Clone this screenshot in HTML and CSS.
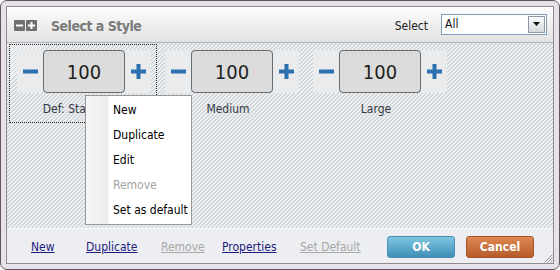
FILE: index.html
```html
<!DOCTYPE html>
<html>
<head>
<meta charset="utf-8">
<link rel="stylesheet" href="styles.css">
</head>
<body>
<div class="window">
  <div class="inner">
    <header class="hdr">
      <svg class="tools" width="24" height="11" viewBox="0 0 24 11">
        <rect x="0" y="0" width="11" height="11" rx="1" fill="#707070"/>
        <rect x="2" y="4.5" width="7" height="2" fill="#fff"/>
        <rect x="12" y="0" width="11" height="11" rx="1" fill="#707070"/>
        <rect x="14" y="4.5" width="7" height="2" fill="#fff"/>
        <rect x="16.5" y="2" width="2" height="7" fill="#fff"/>
      </svg>
      <h1 class="title">Select a Style</h1>
      <span class="sel-label">Select</span>
      <div class="select">
        <span class="sel-value">All</span>
        <span class="sel-drop">
          <svg width="8" height="5" viewBox="0 0 8 5"><path d="M0 0h7L3.5 4z" fill="#111"/></svg>
        </span>
      </div>
    </header>

    <main class="area">
      <div class="cell selected">
        <div class="controls">
          <span class="step"><svg width="15" height="15" viewBox="0 0 15 15"><rect x="0" y="5.5" width="15" height="4" fill="#2c70b0"/></svg></span>
          <span class="value">100</span>
          <span class="step"><svg width="15" height="15" viewBox="0 0 15 15"><rect x="0" y="5.5" width="15" height="4" fill="#2c70b0"/><rect x="5.5" y="0" width="4" height="15" fill="#2c70b0"/></svg></span>
        </div>
        <div class="label">Def: Standard</div>
      </div>
      <div class="cell">
        <div class="controls">
          <span class="step"><svg width="15" height="15" viewBox="0 0 15 15"><rect x="0" y="5.5" width="15" height="4" fill="#2c70b0"/></svg></span>
          <span class="value">100</span>
          <span class="step"><svg width="15" height="15" viewBox="0 0 15 15"><rect x="0" y="5.5" width="15" height="4" fill="#2c70b0"/><rect x="5.5" y="0" width="4" height="15" fill="#2c70b0"/></svg></span>
        </div>
        <div class="label">Medium</div>
      </div>
      <div class="cell">
        <div class="controls">
          <span class="step"><svg width="15" height="15" viewBox="0 0 15 15"><rect x="0" y="5.5" width="15" height="4" fill="#2c70b0"/></svg></span>
          <span class="value">100</span>
          <span class="step"><svg width="15" height="15" viewBox="0 0 15 15"><rect x="0" y="5.5" width="15" height="4" fill="#2c70b0"/><rect x="5.5" y="0" width="4" height="15" fill="#2c70b0"/></svg></span>
        </div>
        <div class="label">Large</div>
      </div>

      <ul class="menu">
        <li>New</li>
        <li>Duplicate</li>
        <li>Edit</li>
        <li class="disabled">Remove</li>
        <li>Set as default</li>
      </ul>
    </main>

    <footer class="foot">
      <nav class="links">
        <a href="#">New</a>
        <a href="#">Duplicate</a>
        <a href="#" class="disabled">Remove</a>
        <a href="#">Properties</a>
        <a href="#" class="disabled">Set Default</a>
      </nav>
      <div class="buttons">
        <button class="btn ok">OK</button>
        <button class="btn cancel">Cancel</button>
      </div>
      <svg class="grip" width="9" height="9" viewBox="0 0 9 9">
        <path d="M8.5 0.5L0.5 8.5M8.5 3.5L3.5 8.5M8.5 6.5L6.5 8.5" stroke="#9a9a9a" stroke-width="1"/>
      </svg>
    </footer>
  </div>
</div>
</body>
</html>
```

FILE: styles.css
```css
* { box-sizing: border-box; }
html, body { margin: 0; padding: 0; }
body {
  width: 560px;
  height: 270px;
  background: #ffffff;
  font-family: "DejaVu Sans Condensed", "DejaVu Sans", sans-serif;
  font-size: 12px;
  color: #222;
}
.window {
  width: 560px;
  height: 270px;
  border: 1px solid #5f5462;
  border-radius: 7px;
  background: #e9e1ea;
  padding: 5px;
}
.inner {
  width: 548px;
  height: 258px;
  border: 1px solid #8f8b95;
  display: flex;
  flex-direction: column;
  background: #eceef1;
}
.hdr {
  flex: none;
  height: 36px;
  border-bottom: 1px solid #b0b3b7;
  background: linear-gradient(#fdfdfd, #e2e2e2);
  display: flex;
  align-items: center;
  padding: 2px 6px 0 7px;
}
.tools { display: block; flex: none; }
.title {
  margin: 0 0 0 13px;
  font-size: 14px;
  font-weight: bold;
  letter-spacing: -0.5px;
  color: #7b7b7b;
}
.sel-label {
  margin-left: auto;
  color: #222;
}
.select {
  margin-left: 13px;
  width: 106px;
  height: 21px;
  margin-top: -3px;
  border: 1px solid #7f9db9;
  background: #fff;
  display: flex;
  align-items: center;
  padding: 0 1px 0 3px;
}
.sel-value { flex: 1; color: #111; }
.sel-drop {
  width: 17px;
  height: 17px;
  border: 1px solid #8c9aa8;
  background: linear-gradient(#fafafa, #d6d9dc);
  display: flex;
  align-items: center;
  justify-content: center;
}
.area {
  flex: 1;
  position: relative;
  display: flex;
  align-items: flex-start;
  padding: 1px 0 0 2px;
  background-color: #dadee1;
  background-image: repeating-linear-gradient(135deg, #d2d7db 0 1.4px, #eef0f2 1.4px 2.83px);
}
.cell {
  width: 148px;
  height: 79px;
  border: 1px dotted transparent;
  padding: 5px 0 0 7px;
  display: flex;
  flex-direction: column;
}
.cell.selected { border-color: #2a2a2a; }
.controls { display: flex; }
.step {
  width: 26px;
  height: 43px;
  background: #e9ebec;
  border-radius: 3px;
  display: flex;
  align-items: center;
  justify-content: center;
}
.value {
  width: 82px;
  height: 43px;
  border: 1px solid #676c71;
  border-radius: 4px;
  background: #dcdcdc;
  display: flex;
  align-items: center;
  justify-content: center;
  font-size: 20px;
  color: #1e1e1e;
}
.label {
  width: 126px;
  margin-top: 9px;
  text-align: center;
  color: #333a44;
  white-space: nowrap;
}
.menu {
  position: absolute;
  left: 78px;
  top: 52px;
  width: 107px;
  margin: 0;
  padding: 2px 0 1px;
  list-style: none;
  border: 1px solid #979797;
  background: linear-gradient(to right, #f6f6f6, #ededed 22px, #ffffff 23px);
}
.menu li {
  height: 25px;
  line-height: 25px;
  padding-left: 27px;
  color: #000;
  white-space: nowrap;
}
.menu li.disabled { color: #a3a3a3; }
.foot {
  flex: none;
  position: relative;
  height: 35px;
  border-top: 1px solid #f6f7f8;
  background: #eceef1;
  display: flex;
  align-items: center;
  padding: 1px 19px 0 24px;
}
.links {
  display: grid;
  grid-template-columns: 55px 75px 61px 78px auto;
}
.links a {
  color: #1c1c80;
  text-decoration: underline;
}
.links a.disabled { color: #a8a8a8; }
.buttons {
  margin-left: auto;
  display: flex;
  gap: 11px;
}
.btn {
  width: 68px;
  height: 22px;
  border-radius: 3px;
  font-family: inherit;
  font-size: 12px;
  font-weight: bold;
  color: #fff;
  padding: 0;
}
.btn.ok {
  border: 1px solid #4d8fb4;
  background: linear-gradient(#80c6e0, #3f8fb8);
}
.btn.cancel {
  border: 1px solid #a85428;
  background: linear-gradient(#de8852, #b75b2b);
}
.grip {
  position: absolute;
  right: 0;
  bottom: 0;
}
```
